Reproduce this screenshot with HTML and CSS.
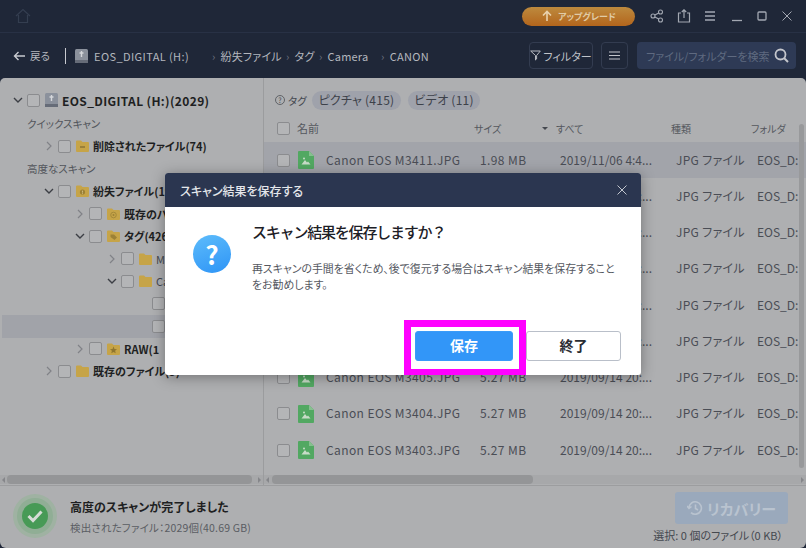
FILE: index.html
```html
<!DOCTYPE html>
<html>
<head>
    <title>Scan Result</title>
<link rel="stylesheet" href="styles.css">
</head>
<body>
    <svg class="defs" width="0" height="0">
        <symbol id="folder" viewBox="0 0 13 12"><path d="M0 1.5 Q0 .5 1 .5 H5 L6.5 2 H12 Q13 2 13 3 V11 Q13 12 12 12 H1 Q0 12 0 11 Z" fill="#c6a448"/></symbol>
        <symbol id="folder-minus" viewBox="0 0 13 12"><path d="M0 1.5 Q0 .5 1 .5 H5 L6.5 2 H12 Q13 2 13 3 V11 Q13 12 12 12 H1 Q0 12 0 11 Z" fill="#c6a448"/><path d="M4 7 H9" stroke="#7d6a34" stroke-width="1.2"/></symbol>
        <symbol id="folder-alert" viewBox="0 0 13 12"><path d="M0 1.5 Q0 .5 1 .5 H5 L6.5 2 H12 Q13 2 13 3 V11 Q13 12 12 12 H1 Q0 12 0 11 Z" fill="#c6a448"/><circle cx="6.5" cy="7" r="2.6" fill="#9c8136"/><path d="M6.5 5.6 V7.6 M6.5 8 V8.8" stroke="#d9c88f" stroke-width=".8"/></symbol>
        <symbol id="folder-target" viewBox="0 0 13 12"><path d="M0 1.5 Q0 .5 1 .5 H5 L6.5 2 H12 Q13 2 13 3 V11 Q13 12 12 12 H1 Q0 12 0 11 Z" fill="#c6a448"/><circle cx="6.5" cy="7" r="2.8" fill="none" stroke="#9c8136" stroke-width=".8"/><circle cx="6.5" cy="7" r="1" fill="#9c8136"/></symbol>
        <symbol id="folder-tag" viewBox="0 0 13 12"><path d="M0 1.5 Q0 .5 1 .5 H5 L6.5 2 H12 Q13 2 13 3 V11 Q13 12 12 12 H1 Q0 12 0 11 Z" fill="#c6a448"/><path d="M3.5 4.5 H7 L10 7.5 L7.5 10 L3.5 7 Z" fill="#9c8136"/></symbol>
        <symbol id="folder-star" viewBox="0 0 13 12"><path d="M0 1.5 Q0 .5 1 .5 H5 L6.5 2 H12 Q13 2 13 3 V11 Q13 12 12 12 H1 Q0 12 0 11 Z" fill="#c6a448"/><path d="M6.5 3.6 L7.5 6 L10 6.2 L8.1 7.8 L8.7 10.2 L6.5 8.9 L4.3 10.2 L4.9 7.8 L3 6.2 L5.5 6 Z" fill="#8f7630"/></symbol>
        <symbol id="file" viewBox="0 0 16 18"><path d="M0 1 Q0 0 1 0 H11 L16 5 V17 Q16 18 15 18 H1 Q0 18 0 17 Z" fill="#52a862"/><path d="M11 0 L16 5 H11 Z" fill="#86c08f"/><path d="M3.5 13.5 L7 9 L9 11.5 L10 10.5 L12.5 13.5 Z" fill="#c8dcc8"/><circle cx="6" cy="7.5" r="1" fill="#c8dcc8"/></symbol>
        <symbol id="drive" viewBox="0 0 13 14"><rect width="13" height="14" rx="1.5" fill="#8b919c"/><rect y="11" width="13" height="3" fill="#666c78"/><path d="M6.5 2 V8 M4.5 4 H8.5" stroke="#d5d7db" stroke-width="1.4"/></symbol>
        <symbol id="open" viewBox="0 0 10 10"><path d="M1 3 L5 7 L9 3" fill="none" stroke="#3c3f45" stroke-width="1.4"/></symbol>
        <symbol id="closed" viewBox="0 0 10 10"><path d="M3 1 L7 5 L3 9" fill="none" stroke="#808287" stroke-width="1.2"/></symbol>
    </svg>

    <div class="titlebar">
        <svg class="home" width="16" height="16" viewBox="0 0 16 16"><path d="M1 8 L8 1.5 L15 8 M3.5 7 V14.5 H12.5 V7" fill="none" stroke="#343e50" stroke-width="1.2"/></svg>
        <button class="upgrade"><svg width="12" height="12" viewBox="0 0 12 12"><path d="M6 11 V2 M2 5.5 L6 1.5 L10 5.5" fill="none" stroke="#e9d2ae" stroke-width="1.6"/></svg>アップグレード</button>
        <div class="win-icons">
            <svg width="14" height="14" viewBox="0 0 14 14"><g fill="none" stroke="#a3a8b2" stroke-width="1.1"><circle cx="10.5" cy="3" r="2"/><circle cx="3" cy="7" r="2"/><circle cx="10.5" cy="11" r="2"/><path d="M4.8 6 L8.8 4 M4.8 8 L8.8 10"/></g></svg>
            <svg width="14" height="14" viewBox="0 0 14 14"><path d="M4 4 H1.5 V13 H12.5 V4 H10 M7 9 V1 M4.8 3 L7 .8 L9.2 3" fill="none" stroke="#a3a8b2" stroke-width="1.2"/></svg>
            <svg class="menu-ic" width="12" height="12" viewBox="0 0 12 12"><path d="M1 2 H11 M1 6 H11 M1 10 H11" stroke="#a3a8b2" stroke-width="1.4"/></svg>
            <svg width="12" height="12" viewBox="0 0 12 12"><path d="M1 10.5 H11" stroke="#a3a8b2" stroke-width="1.3"/></svg>
            <svg width="12" height="12" viewBox="0 0 12 12"><rect x="2" y="2" width="8" height="8" rx="1" fill="none" stroke="#a3a8b2" stroke-width="1.3"/></svg>
            <svg width="12" height="12" viewBox="0 0 12 12"><path d="M1.5 1.5 L10.5 10.5 M10.5 1.5 L1.5 10.5" stroke="#a3a8b2" stroke-width="1"/></svg>
        </div>
    </div>

    <div class="toolbar">
        <svg class="back-arrow" width="12" height="10" viewBox="0 0 12 10"><path d="M12 5 H1.5 M5.5 1 L1.5 5 L5.5 9" fill="none" stroke="#c8cad0" stroke-width="1.4"/></svg>
        <span class="back">戻る</span>
        <span class="sep"></span>
        <svg class="crumb-drive" width="13" height="14"><use href="#drive"/></svg>
        <span class="crumb c1">EOS_DIGITAL (H:)</span>
        <span class="crumb c2"><i>›</i>紛失ファイル</span>
        <span class="crumb c3"><i>›</i>タグ</span>
        <span class="crumb c4"><i>›</i>Camera</span>
        <span class="crumb c5"><i>›</i>CANON</span>
        <button class="filter"><svg width="11" height="11" viewBox="0 0 11 11"><path d="M.7 1 H10.3 L6.6 5.5 V9 L5.5 10 V5.5 Z" fill="none" stroke="#b9bcc3" stroke-width="1"/></svg>フィルター</button>
        <button class="list-btn"><svg width="11" height="9" viewBox="0 0 11 9"><path d="M0 1 H11 M0 4.5 H11 M0 8 H11" stroke="#c4c6cc" stroke-width="1.2"/></svg></button>
        <div class="search">
            <span>ファイル/フォルダーを検索</span>
            <svg width="15" height="15" viewBox="0 0 15 15"><circle cx="6.5" cy="6.5" r="5" fill="none" stroke="#c4c6cc" stroke-width="1.8"/><path d="M10 10 L14 14" stroke="#c4c6cc" stroke-width="2"/></svg>
        </div>
    </div>

    <div class="panel">
        <div class="tree-pane">
            <div class="tree">
                <div class="tree-row bold root"><svg class="tw"><use href="#open"/></svg><span class="cb"></span><svg class="ic" width="13" height="14"><use href="#drive"/></svg><span>EOS_DIGITAL (H:)(2029)</span></div>
                <div class="tree-label">クイックスキャン</div>
                <div class="tree-row bold lv1"><svg class="tw"><use href="#closed"/></svg><span class="cb"></span><svg class="ic" width="13" height="12"><use href="#folder-minus"/></svg><span>削除されたファイル(74)</span></div>
                <div class="tree-label">高度なスキャン</div>
                <div class="tree-row bold lv1"><svg class="tw"><use href="#open"/></svg><span class="cb"></span><svg class="ic" width="13" height="12"><use href="#folder-alert"/></svg><span>紛失ファイル(1995)</span></div>
                <div class="tree-row bold lv2"><svg class="tw"><use href="#closed"/></svg><span class="cb"></span><svg class="ic" width="13" height="12"><use href="#folder-target"/></svg><span>既存のパス(12)</span></div>
                <div class="tree-row bold lv2"><svg class="tw"><use href="#open"/></svg><span class="cb"></span><svg class="ic" width="13" height="12"><use href="#folder-tag"/></svg><span>タグ(426)</span></div>
                <div class="tree-row lv3"><svg class="tw"><use href="#closed"/></svg><span class="cb"></span><svg class="ic" width="13" height="12"><use href="#folder"/></svg><span>M</span></div>
                <div class="tree-row lv3"><svg class="tw"><use href="#open"/></svg><span class="cb"></span><svg class="ic" width="13" height="12"><use href="#folder"/></svg><span>Ca</span></div>
                <div class="tree-row lv4"><span class="tw-gap"></span><span class="cb"></span></div>
                <div class="tree-row lv4 active"><span class="tw-gap"></span><span class="cb"></span></div>
                <div class="tree-row bold lv2"><svg class="tw"><use href="#closed"/></svg><span class="cb"></span><svg class="ic" width="13" height="12"><use href="#folder-star"/></svg><span>RAW(1</span></div>
                <div class="tree-row bold lv1"><svg class="tw"><use href="#closed"/></svg><span class="cb"></span><svg class="ic" width="13" height="12"><use href="#folder"/></svg><span>既存のファイル(5)</span></div>
            </div>
            <div class="hscroll left-scroll"><span class="thumb"></span></div>
        </div>

        <div class="file-pane">
            <div class="tags">
                <span class="help">?</span><span class="tag-label">タグ</span>
                <span class="pill">ピクチャ (415)</span>
                <span class="pill">ビデオ (11)</span>
            </div>
            <div class="head">
                <span class="cb"></span>
                <span class="h-name">名前</span>
                <span class="h-size">サイズ</span>
                <span class="h-sort"></span>
                <span class="h-date">すべて</span>
                <span class="h-type">種類</span>
                <span class="h-folder">フォルダ</span>
            </div>
            <div class="rows">
                <div class="row hot"><span class="cb"></span><svg class="fi"><use href="#file"/></svg><span class="f-name">Canon EOS M3411.JPG</span><span class="f-size">1.98 MB</span><span class="f-date">2019/11/06 4:4...</span><span class="f-type">JPG ファイル</span><span class="f-folder">EOS_D:</span></div>
                <div class="row"><span class="cb"></span><svg class="fi"><use href="#file"/></svg><span class="f-name">Canon EOS M3410.JPG</span><span class="f-size">5.27 MB</span><span class="f-date">2019/09/14 20:...</span><span class="f-type">JPG ファイル</span><span class="f-folder">EOS_D:</span></div>
                <div class="row"><span class="cb"></span><svg class="fi"><use href="#file"/></svg><span class="f-name">Canon EOS M3409.JPG</span><span class="f-size">5.27 MB</span><span class="f-date">2019/09/14 20:...</span><span class="f-type">JPG ファイル</span><span class="f-folder">EOS_D:</span></div>
                <div class="row"><span class="cb"></span><svg class="fi"><use href="#file"/></svg><span class="f-name">Canon EOS M3408.JPG</span><span class="f-size">5.27 MB</span><span class="f-date">2019/09/14 20:...</span><span class="f-type">JPG ファイル</span><span class="f-folder">EOS_D:</span></div>
                <div class="row"><span class="cb"></span><svg class="fi"><use href="#file"/></svg><span class="f-name">Canon EOS M3407.JPG</span><span class="f-size">5.27 MB</span><span class="f-date">2019/09/14 20:...</span><span class="f-type">JPG ファイル</span><span class="f-folder">EOS_D:</span></div>
                <div class="row"><span class="cb"></span><svg class="fi"><use href="#file"/></svg><span class="f-name">Canon EOS M3406.JPG</span><span class="f-size">5.27 MB</span><span class="f-date">2019/09/14 20:...</span><span class="f-type">JPG ファイル</span><span class="f-folder">EOS_D:</span></div>
                <div class="row"><span class="cb"></span><svg class="fi"><use href="#file"/></svg><span class="f-name">Canon EOS M3405.JPG</span><span class="f-size">5.27 MB</span><span class="f-date">2019/09/14 20:...</span><span class="f-type">JPG ファイル</span><span class="f-folder">EOS_D:</span></div>
                <div class="row"><span class="cb"></span><svg class="fi"><use href="#file"/></svg><span class="f-name">Canon EOS M3404.JPG</span><span class="f-size">5.27 MB</span><span class="f-date">2019/09/14 20:...</span><span class="f-type">JPG ファイル</span><span class="f-folder">EOS_D:</span></div>
                <div class="row"><span class="cb"></span><svg class="fi"><use href="#file"/></svg><span class="f-name">Canon EOS M3403.JPG</span><span class="f-size">5.27 MB</span><span class="f-date">2019/09/14 20:...</span><span class="f-type">JPG ファイル</span><span class="f-folder">EOS_D:</span></div>
            </div>
            <div class="hscroll right-scroll"><span class="thumb"></span></div>
            <div class="vscroll"><span class="thumb"></span></div>
        </div>
    </div>

    <div class="footer">
        <div class="done-icon">
            <svg width="44" height="44" viewBox="0 0 44 44">
                <circle cx="22" cy="22" r="22" fill="#9fb2a2"/>
                <circle cx="22" cy="22" r="18" fill="#90ae95"/>
                <circle cx="22" cy="22" r="13" fill="#479a56"/>
                <path d="M15.5 22 L20 26.5 L28.5 17.5" fill="none" stroke="#d6dcd6" stroke-width="3"/>
            </svg>
        </div>
        <div class="done-text">
            <div class="done-title">高度のスキャンが完了しました</div>
            <div class="done-sub">検出されたファイル：2029個(40.69 GB)</div>
        </div>
        <div class="recover">
            <button class="recover-btn"><svg width="16" height="16" viewBox="0 0 16 16"><path d="M2 8 A6.2 6.2 0 1 1 4 12.6 M0 6 L2 8.5 L4.5 6.5 M8.5 4.5 V8.5 L11 10" fill="none" stroke="#b9c3cf" stroke-width="1.6"/></svg>リカバリー</button>
            <div class="selected">選択: 0 個のファイル（0 KB）</div>
        </div>
    </div>

    <!-- dialog -->
    <div class="dialog">
        <div class="dialog-head">
            <span>スキャン結果を保存する</span>
            <svg width="10" height="10" viewBox="0 0 10 10"><path d="M.5 .5 L9.5 9.5 M9.5 .5 L.5 9.5" stroke="#c3c7cf" stroke-width="1"/></svg>
        </div>
        <div class="dialog-body">
            <div class="q-icon">?</div>
            <div class="dialog-text">
                <h2>スキャン結果を保存しますか？</h2>
                <p>再スキャンの手間を省くため、後で復元する場合はスキャン結果を保存すること<br>をお勧めします。</p>
            </div>
        </div>
        <div class="dialog-btns">
            <div class="mark"><button class="save">保存</button></div>
            <button class="quit">終了</button>
        </div>
    </div>
</body>
</html>
```

FILE: styles.css
```css
/* Global Styles */
* {
    box-sizing: border-box;
}

body {
    margin: 0;
    width: 806px;
    height: 548px;
    overflow: hidden;
    position: relative;
    display: flex;
    flex-direction: column;
    background-color: #1f2738;
    font-family: "Noto Sans CJK JP", "Noto Sans", sans-serif;
    font-feature-settings: "palt";
    font-size: 12px;
    color: #44484f;
}

button {
    font-family: inherit;
    font-feature-settings: inherit;
    padding: 0;
}

.defs {
    position: absolute;
}

/* Title bar */
.titlebar {
    height: 33px;
    flex: none;
    display: flex;
    align-items: center;
    padding: 0 13px 0 15px;
    border-bottom: 1px solid #283145;
}

.upgrade {
    margin-left: auto;
    width: 113px;
    height: 19px;
    border: none;
    border-radius: 10px;
    background: linear-gradient(#bd8a3e, #b3651c);
    color: #e0cba6;
    font-size: 9px;
    font-weight: 700;
    display: flex;
    align-items: center;
    justify-content: center;
    gap: 5px;
}

.win-icons {
    display: flex;
    align-items: center;
    margin-left: 15px;
    gap: 13px;
}

.menu-ic {
    margin-right: 2px;
}

/* Toolbar */
.toolbar {
    height: 45px;
    flex: none;
    display: flex;
    align-items: center;
    padding: 0 10px 0 13px;
    color: #b4b7be;
    font-size: 11px;
}

.back {
    margin-left: 5px;
    width: 35px;
    font-size: 10.5px;
}

.sep {
    width: 1px;
    height: 16px;
    background-color: #c8cad0;
}

.crumb-drive {
    margin-left: 9px;
}

.crumb {
    flex: none;
    letter-spacing: .2px;
}

.crumb i {
    font-style: normal;
    margin-right: 5px;
    color: #6d7380;
}

.c1 {
    margin-left: 6px;
    width: 118px;
    letter-spacing: .4px;
}

.c2 {
    width: 74px;
}

.c3 {
    width: 33px;
}

.c4 {
    width: 62px;
}

.c5 {
    letter-spacing: .3px;
}

.filter,
.list-btn {
    height: 27px;
    background: none;
    border: 1px solid #333c50;
    border-radius: 4px;
    color: #c0c3c9;
    display: flex;
    align-items: center;
    justify-content: center;
}

.filter {
    width: 64px;
    margin-left: auto;
    gap: 2px;
    font-size: 11px;
}

.list-btn {
    width: 27px;
    margin-left: 8px;
}

.search {
    width: 159px;
    height: 27px;
    margin-left: 9px;
    border-radius: 4px;
    background-color: #2e3a55;
    display: flex;
    align-items: center;
    justify-content: space-between;
    padding: 0 7px 0 9px;
    color: #5f6a80;
    font-size: 11px;
    white-space: nowrap;
}

/* Main panel */
.panel {
    flex: none;
    height: 408px;
    display: flex;
    background-color: #aeafb1;
    border-radius: 5px 5px 0 0;
    border-bottom: 1px solid #9c9d9f;
}

.tree-pane {
    width: 264px;
    flex: none;
    display: flex;
    flex-direction: column;
    justify-content: space-between;
    border-right: 1px solid #9b9c9e;
    overflow: hidden;
}

.tree {
    padding: 11px 0 0 2px;
}

.tree-row {
    height: 22.5px;
    display: flex;
    align-items: center;
    padding-left: 11px;
    white-space: nowrap;
    color: #1e1f22;
    font-size: 11px;
}

.bold {
    font-weight: 700;
}

.root {
    font-size: 12px;
    letter-spacing: .35px;
    margin-bottom: 1px;
}

.lv1 {
    padding-left: 42px;
}

.lv2 {
    padding-left: 73px;
}

.lv3 {
    padding-left: 105px;
    color: #44484f;
}

.lv4 {
    padding-left: 136px;
}

.active {
    background-color: #a1a3a9;
}

.tree-label {
    height: 22.5px;
    line-height: 22px;
    padding-left: 25px;
    font-size: 10.5px;
    color: #52555b;
}

.tw,
.tw-gap {
    width: 10px;
    height: 10px;
    margin-right: 4px;
    flex: none;
}

.cb {
    display: inline-block;
    width: 13px;
    height: 13px;
    flex: none;
    border: 1px solid #8b8c8f;
    border-radius: 2px;
    background-color: #b4b5b7;
}

.ic {
    margin: 0 4px 0 5px;
    flex: none;
}

/* Scrollbars */
.hscroll {
    height: 9px;
    margin-bottom: 1px;
    flex: none;
    display: flex;
    position: relative;
    background-color: #a7a8aa;
}

.hscroll .thumb {
    display: block;
    height: 100%;
    border-radius: 4px;
    background-color: #949597;
}

.hscroll::before,
.hscroll::after {
    content: "";
    position: absolute;
    top: 2px;
    border: 3px solid transparent;
    border-left-width: 0;
    border-right: 3px solid #85868a;
}

.hscroll::before {
    left: 2px;
}

.hscroll::after {
    right: 2px;
    transform: scaleX(-1);
}

.left-scroll {
    padding: 0 11px 0 7px;
}

.left-scroll .thumb {
    width: 100%;
}

.right-scroll {
    padding-left: 8px;
}

.right-scroll .thumb {
    width: 261px;
}

.vscroll {
    position: absolute;
    top: 46px;
    right: 2px;
    width: 5px;
    height: 344px;
}

.vscroll .thumb {
    display: block;
    height: 100%;
    border-radius: 3px;
    background-color: #98999b;
}

/* File list */
.file-pane {
    flex: 1;
    min-width: 0;
    position: relative;
    display: flex;
    flex-direction: column;
    overflow: hidden;
}

.tags {
    height: 44px;
    flex: none;
    display: flex;
    align-items: center;
    padding-left: 11px;
}

.help {
    width: 10px;
    height: 10px;
    border: 1px solid #606368;
    border-radius: 50%;
    font-size: 7px;
    line-height: 8px;
    text-align: center;
}

.tag-label {
    margin-left: 3px;
    width: 24px;
    font-size: 10.5px;
}

.pill {
    height: 19px;
    line-height: 18px;
    padding: 0 6.5px;
    margin-right: 7px;
    border-radius: 10px;
    background-color: #9fa2ab;
    font-size: 12px;
    letter-spacing: .25px;
    color: #3d414a;
}

.head {
    height: 20px;
    flex: none;
    display: flex;
    align-items: center;
    padding: 0 0 8px 13px;
    font-size: 10px;
    color: #55585e;
}

.head span {
    flex: none;
}

.head .cb {
    margin-top: 1px;
}

.h-name {
    margin-left: 7px;
    width: 177px;
    font-size: 11px;
}

.h-size {
    width: 68px;
}

.h-sort {
    width: 0;
    height: 0;
    margin-right: 8px;
    border: 3px solid transparent;
    border-top: 3px solid #44484f;
    border-bottom: none;
}

.h-date {
    width: 115px;
}

.h-type {
    width: 80px;
}

.rows {
    flex: 1;
    overflow: hidden;
}

.row {
    height: 36.25px;
    display: flex;
    align-items: center;
    padding-left: 13px;
    white-space: nowrap;
    font-size: 12px;
    color: #4a4d55;
}

.row span:not(.cb) {
    padding-bottom: 2px;
}

.hot {
    background-color: #a2a4aa;
}

.fi {
    width: 16px;
    height: 18px;
    margin-left: 8px;
    flex: none;
}

.f-name {
    margin-left: 12px;
    width: 154px;
    flex: none;
    letter-spacing: .4px;
}

.f-size {
    width: 80px;
    flex: none;
    letter-spacing: .4px;
}

.f-date {
    width: 116px;
    flex: none;
}

.f-type {
    width: 81px;
    flex: none;
    letter-spacing: .3px;
}

.f-folder {
    flex: none;
}

/* Footer */
.footer {
    flex: 1;
    display: flex;
    background-color: #aeafb1;
    border-radius: 0 0 6px 6px;
    padding: 8px 18px 0 13px;
}

.done-icon {
    width: 44px;
    height: 44px;
    flex: none;
}

.done-text {
    margin-left: 13px;
    padding-top: 3px;
}

.done-title {
    font-size: 12px;
    font-weight: 700;
    color: #1e1f22;
    line-height: 20px;
}

.done-sub {
    font-size: 10.5px;
    letter-spacing: .2px;
    color: #5a5d63;
    line-height: 18px;
    margin-top: 2px;
}

.recover {
    margin-left: auto;
    display: flex;
    flex-direction: column;
    align-items: flex-end;
}

.recover-btn {
    width: 113px;
    height: 32px;
    margin-top: -2px;
    border: none;
    border-radius: 3px;
    background-color: #9aa9bc;
    color: #b9c3cf;
    font-size: 15px;
    font-weight: 700;
    display: flex;
    align-items: center;
    justify-content: center;
    gap: 4px;
}

.selected {
    margin: 3px 5px 0 0;
    font-size: 11px;
    line-height: 16px;
    color: #44484f;
}

/* Dialog */
.dialog {
    position: absolute;
    left: 165px;
    top: 173px;
    width: 476px;
    height: 202px;
    display: flex;
    flex-direction: column;
    background-color: #fff;
    border-radius: 3px;
    box-shadow: 0 2px 14px rgba(0, 0, 0, .35);
}

.dialog-head {
    height: 34px;
    flex: none;
    display: flex;
    align-items: center;
    justify-content: space-between;
    padding: 0 14px 0 15px;
    background-color: #2b3650;
    border-radius: 3px 3px 0 0;
    color: #e4e6ea;
    font-size: 12px;
    font-weight: 500;
}

.dialog-body {
    display: flex;
    padding: 28px 20px 0 28px;
}

.q-icon {
    width: 38px;
    height: 38px;
    flex: none;
    border-radius: 50%;
    background: linear-gradient(160deg, #5dbcfb, #2e94f6);
    color: #fff;
    font-size: 26px;
    font-weight: 700;
    line-height: 38px;
    text-align: center;
}

.dialog-text {
    margin-left: 21px;
}

.dialog-text h2 {
    margin: -15px 0 0;
    font-size: 15px;
    font-weight: 500;
    line-height: 24px;
    color: #1d2026;
    font-feature-settings: "palt" 0;
    letter-spacing: -1.2px;
}

.dialog-text p {
    margin: 16px 0 0;
    font-size: 10.9px;
    line-height: 16px;
    white-space: nowrap;
    color: #55585f;
}

.dialog-btns {
    margin-top: auto;
    display: flex;
    align-items: flex-start;
    justify-content: flex-end;
    padding-right: 20px;
}

.mark {
    height: 55px;
    padding: 4px 6px 0 4px;
    border: 7px solid #ff00ff;
    border-bottom-width: 6px;
    display: flex;
}

.save,
.quit {
    height: 30px;
    padding-bottom: 2px;
    border-radius: 3px;
    font-size: 14px;
    font-weight: 700;
}

.save {
    width: 98px;
    border: 1px solid #3a9bf8;
    background-color: #3296f8;
    color: #fff;
}

.quit {
    width: 95px;
    margin-top: 11px;
    border: 1px solid #b9bfc9;
    background-color: #fff;
    color: #2a2d33;
}
```
